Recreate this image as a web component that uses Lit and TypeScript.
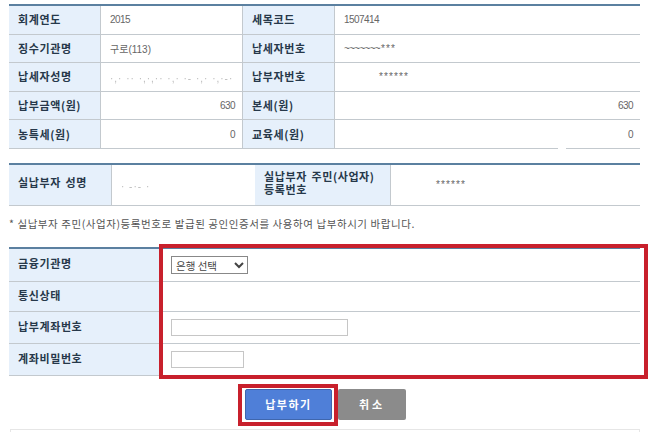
import { LitElement, css, html } from 'lit';
import { customElement } from 'lit/decorators.js';

@customElement('app-root')
export class AppRoot extends LitElement {
  static get styles() {
    return css`
      :host {
        display: block;
        position: relative;
        width: 650px;
        height: 432px;
        overflow: hidden;
        background: #fff;
        color: #666;
        font-family: 'Liberation Sans', 'Noto Sans CJK KR', sans-serif;
        font-size: 10px;
      }

      .page {
        padding: 4px 10px 0 9px;
      }

      .grid {
        display: grid;
        border-top: 2px solid #5b80a0;
      }

      .tax {
        grid-template-columns: 91px 143px 91px 306px;
        grid-auto-rows: 28.6px;
      }

      .payer {
        margin-top: 14px;
        grid-template-columns: 102px 144px 135px 250px;
        grid-auto-rows: 41px;
      }

      .bank {
        margin-top: 16px;
        grid-template-columns: 151px 480px;
        grid-template-rows: 33px 30px 32px 32px;
      }

      .label,
      .value {
        display: flex;
        align-items: center;
        border-bottom: 1px solid #c3c9ce;
      }

      .label {
        padding-left: 9px;
        background: #e6f0fb;
        color: #26384a;
        font-family: 'Noto Sans CJK KR', sans-serif;
        font-size: 11px;
        font-weight: 700;
        letter-spacing: 0.6px;
        word-spacing: 1.5px;
        line-height: 13px;
      }

      .payer .label {
        padding-bottom: 4px;
      }

      .value {
        position: relative;
        padding: 0 9px;
        border-left: 1px solid #c3c9ce;
        letter-spacing: -0.55px;
      }

      .tax .value.after {
        border-right: 1px solid #c3c9ce;
      }

      .plain {
        letter-spacing: 0;
      }

      .num {
        justify-content: flex-end;
        padding-right: 7px;
      }

      .gap::after {
        content: '';
        position: absolute;
        right: 74px;
        bottom: -1px;
        width: 8px;
        height: 1px;
        background: #fff;
      }

      .smudge {
        padding-top: 4px;
        color: #bbb;
        letter-spacing: 1px;
        white-space: nowrap;
        filter: blur(0.6px);
      }

      .tilde {
        letter-spacing: -0.7px;
        margin-right: 1px;
      }

      .stars {
        letter-spacing: 1.1px;
      }

      .stars-one {
        padding-left: 44px;
      }

      .stars-two {
        padding-left: 45px;
      }

      .note {
        margin: 11px 0 0 0;
        height: 14px;
        line-height: 14px;
        color: #555;
        font-family: 'Noto Sans CJK KR', sans-serif;
        font-size: 10.5px;
        letter-spacing: 0.57px;
        white-space: nowrap;
      }

      .bank .label {
        padding-bottom: 2px;
      }

      .bank .value {
        border-left: none;
        padding-left: 11px;
      }

      select {
        width: 77px;
        height: 18px;
        padding: 0;
        border: 1px solid #888;
        border-radius: 0;
        background: #fff;
        color: #444;
        font-family: 'Noto Sans CJK KR', sans-serif;
        font-size: 10.5px;
      }

      input {
        box-sizing: border-box;
        height: 17px;
        border: 1px solid #c6c6c6;
        background: #fff;
      }

      .account {
        width: 177px;
      }

      .password {
        width: 73px;
      }

      .actions {
        display: flex;
        justify-content: flex-start;
        gap: 6px;
        margin: 13px 0 0 236px;
      }

      button {
        height: 31px;
        border: none;
        border-radius: 2px;
        color: #fff;
        font-family: 'Noto Sans CJK KR', sans-serif;
        font-size: 11px;
        font-weight: 700;
      }

      .pay {
        width: 87px;
        background: #4f7fd8;
        border: 1px solid #3f66ad;
        letter-spacing: 1.5px;
      }

      .cancel {
        width: 68px;
        background: #8b8b8b;
        letter-spacing: 3px;
      }

      .bottom {
        margin: 9px 0 0 1px;
        height: 4px;
        border: 1px solid #e6e6e6;
      }

      .mark {
        position: absolute;
        box-sizing: border-box;
        border: 4px solid #c8202c;
        pointer-events: none;
      }

      .mark-form {
        left: 159px;
        top: 244px;
        width: 489px;
        height: 135px;
      }

      .mark-pay {
        left: 238px;
        top: 384px;
        width: 100px;
        height: 42px;
      }
    `;
  }

  render() {
    return html`
      <div class="page">
        <div class="grid tax">
          <div class="label">회계연도</div>
          <div class="value after">2015</div>
          <div class="label">세목코드</div>
          <div class="value">1507414</div>

          <div class="label">징수기관명</div>
          <div class="value after plain">구로(113)</div>
          <div class="label">납세자번호</div>
          <div class="value"><span class="tilde">~~~~~~~</span><span class="stars">***</span></div>

          <div class="label">납세자성명</div>
          <div class="value after"><span class="smudge">·,· ·· ·,·,·· ·,· ·- ·,· ·,·-·</span></div>
          <div class="label">납부자번호</div>
          <div class="value stars-one"><span class="stars">******</span></div>

          <div class="label">납부금액(원)</div>
          <div class="value after num">630</div>
          <div class="label">본세(원)</div>
          <div class="value num">630</div>

          <div class="label">농특세(원)</div>
          <div class="value after num">0</div>
          <div class="label">교육세(원)</div>
          <div class="value num gap">0</div>
        </div>

        <div class="grid payer">
          <div class="label">실납부자 성명</div>
          <div class="value after"><span class="smudge">· -·- ·</span></div>
          <div class="label">실납부자 주민(사업자)<br />등록번호</div>
          <div class="value stars-two"><span class="stars">******</span></div>
        </div>

        <p class="note">* 실납부자 주민(사업자)등록번호로 발급된 공인인증서를 사용하여 납부하시기 바랍니다.</p>

        <div class="grid bank">
          <div class="label">금융기관명</div>
          <div class="value">
            <select><option>은행 선택</option></select>
          </div>
          <div class="label">통신상태</div>
          <div class="value"></div>
          <div class="label">납부계좌번호</div>
          <div class="value"><input class="account" type="text" /></div>
          <div class="label">계좌비밀번호</div>
          <div class="value"><input class="password" type="password" /></div>
        </div>

        <div class="actions">
          <button class="pay">납부하기</button>
          <button class="cancel">취소</button>
        </div>
        <div class="bottom"></div>
      </div>
      <div class="mark mark-form"></div>
      <div class="mark mark-pay"></div>
    `;
  }
}
